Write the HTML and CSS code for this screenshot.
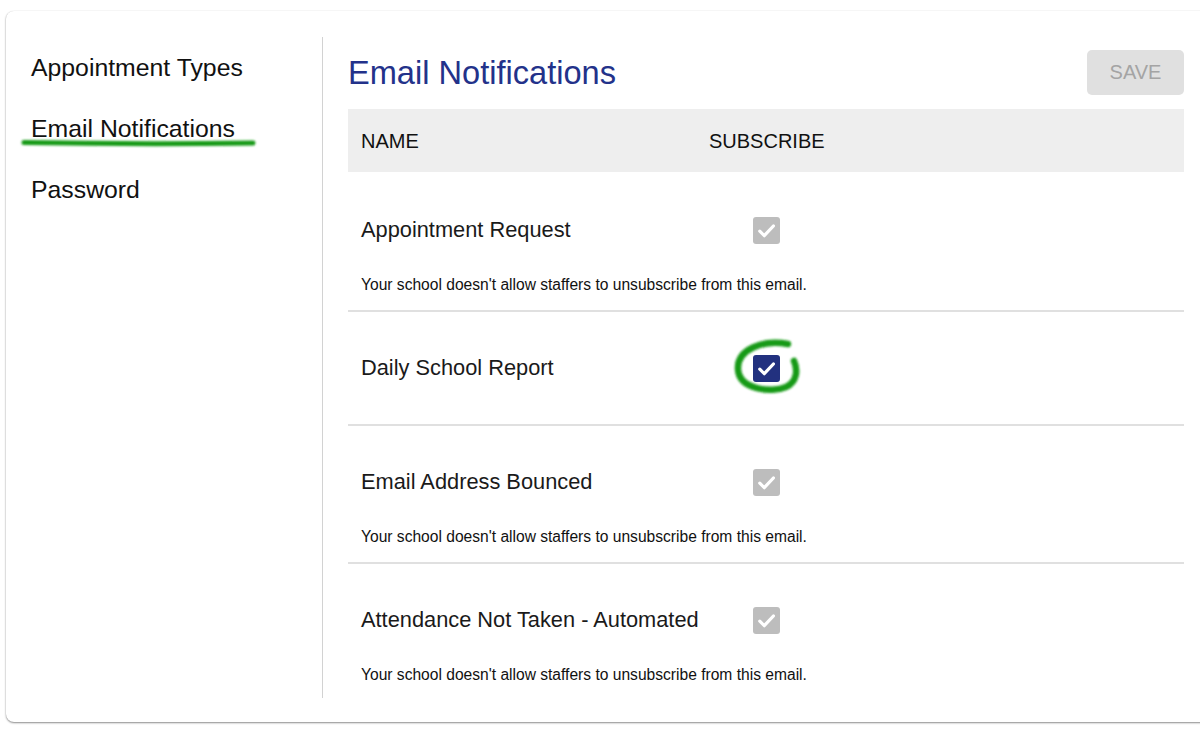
FILE: index.html
```html
<!DOCTYPE html>
<html lang="en">
<head>
<meta charset="utf-8">
<title>Email Notifications</title>
<link rel="stylesheet" href="styles.css">
</head>
<body>
<div class="card">
  <nav class="sidebar">
    <a class="nav-item">Appointment Types</a>
    <a class="nav-item">Email Notifications</a>
    <a class="nav-item">Password</a>
  </nav>
  <main class="main">
    <header class="header">
      <h1 class="title">Email Notifications</h1>
      <button class="save" disabled>SAVE</button>
    </header>
    <div class="thead">
      <div class="th">NAME</div>
      <div class="th">SUBSCRIBE</div>
    </div>
    <div class="row">
      <div class="row-main">
        <div class="name">Appointment Request</div>
        <div class="cell"><span class="check disabled"><svg viewBox="0 0 27 27"><path d="M6.8 14.2l4.5 4.5L20.4 9"/></svg></span></div>
      </div>
      <div class="note">Your school doesn't allow staffers to unsubscribe from this email.</div>
    </div>
    <div class="row no-note">
      <div class="row-main">
        <div class="name">Daily School Report</div>
        <div class="cell"><span class="check on"><svg viewBox="0 0 27 27"><path d="M6.8 14.2l4.5 4.5L20.4 9"/></svg></span></div>
      </div>
    </div>
    <div class="row">
      <div class="row-main">
        <div class="name">Email Address Bounced</div>
        <div class="cell"><span class="check disabled"><svg viewBox="0 0 27 27"><path d="M6.8 14.2l4.5 4.5L20.4 9"/></svg></span></div>
      </div>
      <div class="note">Your school doesn't allow staffers to unsubscribe from this email.</div>
    </div>
    <div class="row">
      <div class="row-main">
        <div class="name">Attendance Not Taken - Automated</div>
        <div class="cell"><span class="check disabled"><svg viewBox="0 0 27 27"><path d="M6.8 14.2l4.5 4.5L20.4 9"/></svg></span></div>
      </div>
      <div class="note">Your school doesn't allow staffers to unsubscribe from this email.</div>
    </div>
  </main>
</div>
<svg class="marks" viewBox="0 0 1200 739" width="1200" height="739">
  <defs>
    <filter id="soft" x="-10%" y="-50%" width="120%" height="200%"><feGaussianBlur stdDeviation="1"/></filter>
  </defs>
  <g fill="none" stroke="#159a15" stroke-linecap="round" filter="url(#soft)">
    <path d="M24 142.5 Q140 144.5 253 143" stroke-width="5"/>
    <path d="M788 344 C762 339 737 350 738 369 C739 390 772 393 786 387 C797 382 798 370 794 361" stroke-width="6.5"/>
  </g>
</svg>
</body>
</html>
```
FILE: styles.css
```css
html, body {
  margin: 0;
  padding: 0;
  background: #ffffff;
}
body {
  width: 1200px;
  height: 739px;
  overflow: hidden;
  position: relative;
  font-family: "Liberation Sans", Arial, sans-serif;
  color: #111111;
}
.card {
  margin: 11px 0 0 6px;
  width: 1230px;
  height: 711px;
  box-sizing: border-box;
  padding: 26px 0 24px;
  background: #ffffff;
  border-radius: 8px;
  box-shadow: 0 1px 2px rgba(0, 0, 0, 0.45), 0 0 1px rgba(0, 0, 0, 0.12);
  display: flex;
}
.sidebar {
  width: 317px;
  flex: none;
  box-sizing: border-box;
  padding-left: 25px;
  border-right: 1px solid #d2d2d2;
  display: flex;
  flex-direction: column;
}
.nav-item {
  font-size: 24.8px;
  line-height: 61px;
  height: 61px;
  color: #111111;
}
.main {
  width: 861px;
  flex: none;
  padding-left: 25px;
  box-sizing: border-box;
}
.header {
  display: flex;
  justify-content: space-between;
  align-items: center;
  padding-top: 13px;
  height: 45px;
  margin-bottom: 14px;
}
.title {
  margin: 0;
  font-size: 32.6px;
  font-weight: normal;
  color: #23328a;
  line-height: 45px;
}
.save {
  width: 97px;
  height: 45px;
  border: none;
  border-radius: 5px;
  background: #e0e0e0;
  color: #a4a4a4;
  font-family: "Liberation Sans", Arial, sans-serif;
  font-size: 20px;
  padding: 0;
}
.thead {
  height: 63px;
  box-sizing: border-box;
  padding-top: 2px;
  background: #eeeeee;
  display: grid;
  grid-template-columns: 361px 1fr;
  align-items: center;
}
.th {
  font-size: 20px;
  color: #111111;
}
.th:first-child {
  padding-left: 13px;
}
.row {
  padding: 34px 0 16px;
}
.row + .row {
  border-top: 2px solid #e0e0e0;
  padding-top: 32px;
}
.row.no-note {
  padding-bottom: 32px;
}
.row-main {
  height: 48px;
  display: grid;
  grid-template-columns: 361px 1fr;
  align-items: center;
}
.name {
  padding-left: 13px;
  font-size: 21.8px;
  color: #1a1a1a;
}
.cell {
  padding-left: 44px;
  display: flex;
  align-items: center;
}
.check {
  width: 27px;
  height: 27px;
  border-radius: 3px;
  display: block;
}
.check svg {
  display: block;
  width: 27px;
  height: 27px;
}
.check path {
  fill: none;
  stroke: #ffffff;
  stroke-width: 3.2;
  stroke-linecap: round;
  stroke-linejoin: round;
}
.check.disabled {
  background: #bdbdbd;
}
.check.on {
  background: #22317f;
}
.note {
  margin-top: 22px;
  padding-left: 13px;
  font-size: 15.6px;
  line-height: 18px;
  color: #111111;
}
.marks {
  position: absolute;
  left: 0;
  top: 0;
  pointer-events: none;
}
```
